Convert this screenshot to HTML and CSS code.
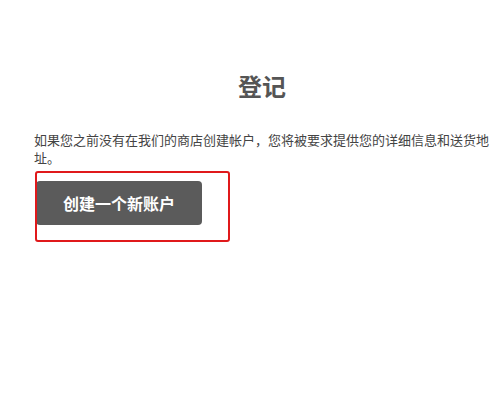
FILE: index.html
```html
<!DOCTYPE html>
<html lang="zh-CN">
<head>
    <meta charset="UTF-8">
    <meta name="viewport" content="width=device-width, initial-scale=1.0">
    <title>登记</title>
    <link rel="stylesheet" href="styles.css">
</head>
<body>
    <div class="register">
        <h2 class="register-title">登记</h2>
        <p class="register-text">如果您之前没有在我们的商店创建帐户，您将被要求提供您的详细信息和送货地址。</p>
        <div class="action">
            <a href="#" class="create-btn">创建一个新账户</a>
            <span class="highlight"></span>
        </div>
    </div>
</body>
</html>
```

FILE: styles.css
```css
* {
    margin: 0;
    padding: 0;
    box-sizing: border-box;
    font-family: "Liberation Sans", "Noto Sans CJK SC", sans-serif;
}

body {
    background: #ffffff;
    width: 500px;
    height: 407px;
}

.register {
    padding: 72px 10px 0 34px;
    width: 500px;
}

.register-title {
    text-align: center;
    font-size: 24px;
    line-height: 32px;
    font-weight: bold;
    color: #555555;
    margin-bottom: 28px;
}

.register-text {
    font-size: 13px;
    line-height: 18px;
    color: #444444;
    width: 460px;
}

.action {
    position: relative;
    margin-top: 13px;
}

.create-btn {
    display: inline-flex;
    align-items: center;
    justify-content: center;
    width: 166px;
    height: 44px;
    margin-left: 2px;
    background: #5b5b5b;
    color: #ffffff;
    font-size: 16px;
    font-weight: bold;
    text-decoration: none;
    border-radius: 4px;
}

/* red annotation box */
.highlight {
    position: absolute;
    left: 1px;
    top: -10px;
    width: 195px;
    height: 71px;
    border: 2px solid #e0191b;
    border-radius: 3px;
}
```
